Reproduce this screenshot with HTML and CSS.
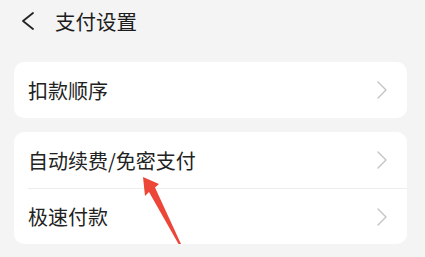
FILE: index.html
```html
<!DOCTYPE html>
<html lang="zh-CN">
<head>
    <meta charset="UTF-8">
    <meta name="viewport" content="width=device-width, initial-scale=1.0">
    <title>支付设置</title>
    <link rel="stylesheet" href="styles.css">
</head>
<body>
    <div class="page">
        <div class="header">
            <svg class="back" width="16" height="20" viewBox="0 0 16 20">
                <path d="M13 2 L3 10 L13 18" fill="none" stroke="#222" stroke-width="1.8" stroke-linecap="round" stroke-linejoin="round"/>
            </svg>
            <h1>支付设置</h1>
        </div>

        <div class="list">
            <div class="card">
                <div class="row">
                    <span>扣款顺序</span>
                    <svg class="chev" width="12" height="18" viewBox="0 0 12 18"><path d="M2 1 L10 9 L2 17" fill="none" stroke="#c4c4c4" stroke-width="1.4" stroke-linecap="round" stroke-linejoin="round"/></svg>
                </div>
            </div>
            <div class="card">
                <div class="row">
                    <span>自动续费/免密支付</span>
                    <svg class="chev" width="12" height="18" viewBox="0 0 12 18"><path d="M2 1 L10 9 L2 17" fill="none" stroke="#c4c4c4" stroke-width="1.4" stroke-linecap="round" stroke-linejoin="round"/></svg>
                </div>
                <div class="row">
                    <span>极速付款</span>
                    <svg class="chev" width="12" height="18" viewBox="0 0 12 18"><path d="M2 1 L10 9 L2 17" fill="none" stroke="#c4c4c4" stroke-width="1.4" stroke-linecap="round" stroke-linejoin="round"/></svg>
                </div>
            </div>
        </div>

        <!-- annotation arrow over the list -->
        <svg class="pointer" width="425" height="257" viewBox="0 0 425 257">
            <polygon points="143,177 159,184 155,187.5 181,244 178.5,244 149,192 145,196" fill="#ec4638"/>
        </svg>
    </div>
</body>
</html>
```

FILE: styles.css
```css
* {
    box-sizing: border-box;
    font-family: "Noto Sans CJK SC", "Noto Sans", sans-serif;
}
body {
    margin: 0;
    background-color: #f4f4f4;
}
.page {
    position: relative;
    width: 425px;
    height: 257px;
    overflow: hidden;
}
.header {
    height: 42px;
    display: flex;
    align-items: center;
    padding-left: 20px;
}
.back {
    display: block;
    margin-right: 19px;
}
h1 {
    margin: 0;
    font-size: 20.5px;
    font-weight: 400;
    color: #1c1c1c;
    line-height: 1;
}
.list {
    display: flex;
    flex-direction: column;
    gap: 14px;
    padding: 20px 18px 0 14px;
}
.card {
    background-color: #fff;
    border-radius: 10px;
}
.row {
    height: 56px;
    margin-left: 14px;
    padding-right: 19px;
    display: flex;
    align-items: center;
    justify-content: space-between;
    font-size: 20px;
    color: #222;
}
.row + .row {
    border-top: 1px solid #ededed;
}
.chev {
    display: block;
}
.pointer {
    position: absolute;
    left: 0;
    top: 0;
}
```
